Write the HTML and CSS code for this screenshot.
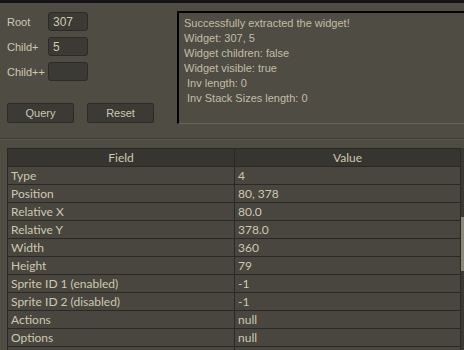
FILE: index.html
```html
<!DOCTYPE html>
<html lang="en">
<head>
  <meta charset="UTF-8" />
  <title>Widget Inspector</title>
  <link rel="stylesheet" href="styles.css">
</head>
<body>
  <div class="topbar"></div>

  <div class="top">
    <form class="query-form">
      <div class="field-row">
        <label for="root">Root</label>
        <input id="root" value="307"/>
      </div>
      <div class="field-row">
        <label for="child">Child+</label>
        <input id="child" value="5"/>
      </div>
      <div class="field-row">
        <label for="child2">Child++</label>
        <input id="child2" value=""/>
      </div>
      <div class="buttons">
        <button type="button" class="btn">Query</button>
        <button type="button" class="btn">Reset</button>
      </div>
    </form>

    <div class="log">
      <div>Successfully extracted the widget!</div>
      <div>Widget: 307, 5</div>
      <div>Widget children: false</div>
      <div>Widget visible: true</div>
      <div>&nbsp;Inv length: 0</div>
      <div>&nbsp;Inv Stack Sizes length: 0</div>
    </div>
  </div>

  <div class="separator"></div>

  <div class="table-wrap">
    <table class="props">
      <thead>
        <tr><th>Field</th><th>Value</th></tr>
      </thead>
      <tbody>
        <tr><td>Type</td><td>4</td></tr>
        <tr><td>Position</td><td>80, 378</td></tr>
        <tr><td>Relative X</td><td>80.0</td></tr>
        <tr><td>Relative Y</td><td>378.0</td></tr>
        <tr><td>Width</td><td>360</td></tr>
        <tr><td>Height</td><td>79</td></tr>
        <tr><td>Sprite ID 1 (enabled)</td><td>-1</td></tr>
        <tr><td>Sprite ID 2 (disabled)</td><td>-1</td></tr>
        <tr><td>Actions</td><td>null</td></tr>
        <tr><td>Options</td><td>null</td></tr>
        <tr><td></td><td></td></tr>
      </tbody>
    </table>
    <div class="scrollbar"><div class="thumb"></div></div>
  </div>
</body>
</html>
```

FILE: styles.css
```css
:root {
  --bg: #4f4c44;
  --row: #48463e;
  --head: #37352f;
  --grid: #2a2924;
  --input: #3b3a34;
  --text: #cdc9b1;
}
* { box-sizing: border-box; margin:0; padding:0; }
html, body { height:100%; overflow:hidden; }
body {
  background: var(--bg);
  color: var(--text);
  font-family: 'Liberation Sans', Arial, sans-serif;
  font-size: 11px;
}
.topbar { height:3px; background:#141414; }

.top { display:flex; padding:8px 0 0 7px; height:134px; }
.query-form { width:170px; flex:none; padding-top:1px; }
.field-row { display:flex; align-items:center; height:19px; margin-bottom:6px; }
.field-row label { width:41px; }
.field-row input {
  width:40px; height:19px; padding:0 4px;
  background: var(--input); color: var(--text);
  border:1px solid #2c2b27; border-radius:3px;
  font: inherit; font-size:12px; outline:none;
}
.buttons { display:flex; gap:13px; margin-top:22px; }
.btn {
  width:67px; height:20px;
  background: var(--input); color: var(--text);
  border:1px solid #2c2b27; border-radius:2px;
  font: inherit; font-size:11px;
}

.log {
  flex:1; height:113px;
  border-top:2px solid #000; border-left:2px solid #000;
  border-bottom:1px solid #67635a;
  padding:3px 0 0 5px;
  line-height:15px;
  color:#c2bea6;
}

.separator { height:2px; margin-top:1px; border-top:1px solid #3f3d37; background:#5b5850; }

.table-wrap { display:flex; padding:8px 0 0 7px; }
.props {
  width:454px; border-collapse:collapse;
  font-family:'Lato', sans-serif; font-size:12px;
  table-layout:fixed;
}
.props th, .props td {
  height:18px; padding:0 3px; line-height:16px;
  border:1px solid var(--grid);
  text-align:left; font-weight:normal; white-space:nowrap;
}
.props tr { height:18px; }
.props th { background: var(--head); text-align:center; }
.props td { background: var(--row); }
.props th:first-child, .props td:first-child { width:227px; }
.scrollbar { width:3px; height:210px; background:#3a3832; position:relative; }
.thumb { position:absolute; top:69px; left:0; width:3px; height:54px; background:#8b877a; }
```
